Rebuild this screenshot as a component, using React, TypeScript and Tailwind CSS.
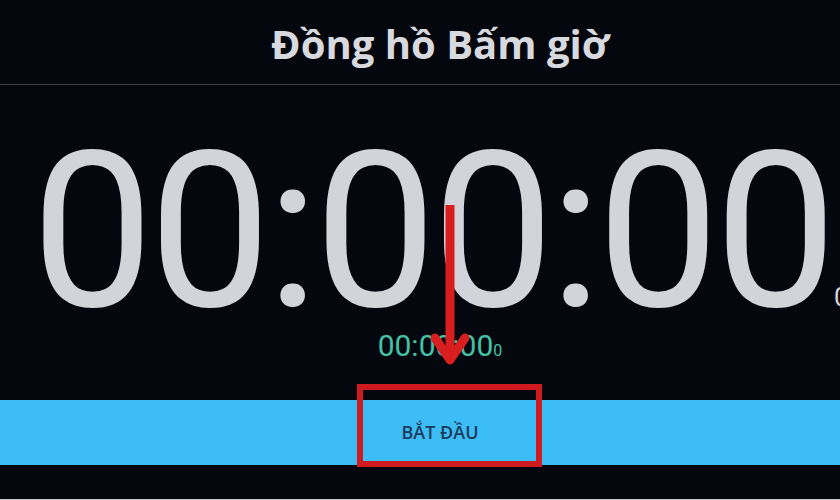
import React from 'react'

export default function App() {
  return (
    <div className="relative w-full h-[500px] overflow-hidden bg-[#05070f]">
      <div className="w-[880px] h-full flex flex-col">
        {/* Header */}
        <div className="h-[85px] flex items-center justify-center border-b border-[#3b3e46] shrink-0">
          <h1 className="font-['Open_Sans',sans-serif] font-bold text-[40px] leading-none text-[#d8d9de] pt-[4px]">
            Đồng hồ Bấm giờ
          </h1>
        </div>

        {/* Main time */}
        <div className="mt-[47px] h-[200px] text-center font-['Roboto',sans-serif] text-[218px] leading-[200px] tracking-[-5px] text-[#d3d4da] whitespace-nowrap">
          00:00:00
          <span className="ml-[2px] text-[26px] leading-[0] tracking-normal">0</span>
        </div>

        {/* Lap time */}
        <div className="h-[28px] text-center font-['Roboto',sans-serif] text-[30px] leading-[28px] text-[#44c2a5] whitespace-nowrap">
          00:00:00<span className="text-[16px] leading-[0]">0</span>
        </div>

        {/* Start button */}
        <button
          type="button"
          className="mt-[40px] h-[65px] w-full shrink-0 bg-[#3dbdf6] flex items-center justify-center font-['Open_Sans',sans-serif] font-semibold text-[18px] text-[#1c3a5c] uppercase"
        >
          BẮT ĐẦU
        </button>
      </div>

      {/* Annotation: red box */}
      <div className="absolute left-[357px] top-[384px] w-[185px] h-[83px] border-[6px] border-[#cf1b20] pointer-events-none" />

      {/* Annotation: red arrow */}
      <svg
        className="absolute left-[430px] top-[200px] pointer-events-none"
        width="40"
        height="170"
        viewBox="0 0 40 170"
      >
        <line x1="20" y1="5" x2="20" y2="155" stroke="#d81e1e" strokeWidth="9" />
        <polyline
          points="5,138 20,160 35,138"
          fill="none"
          stroke="#d81e1e"
          strokeWidth="9"
          strokeLinecap="round"
          strokeLinejoin="round"
        />
      </svg>

      <div className="absolute left-0 bottom-0 w-full h-px bg-[#c9cbd0]" />
    </div>
  )
}
